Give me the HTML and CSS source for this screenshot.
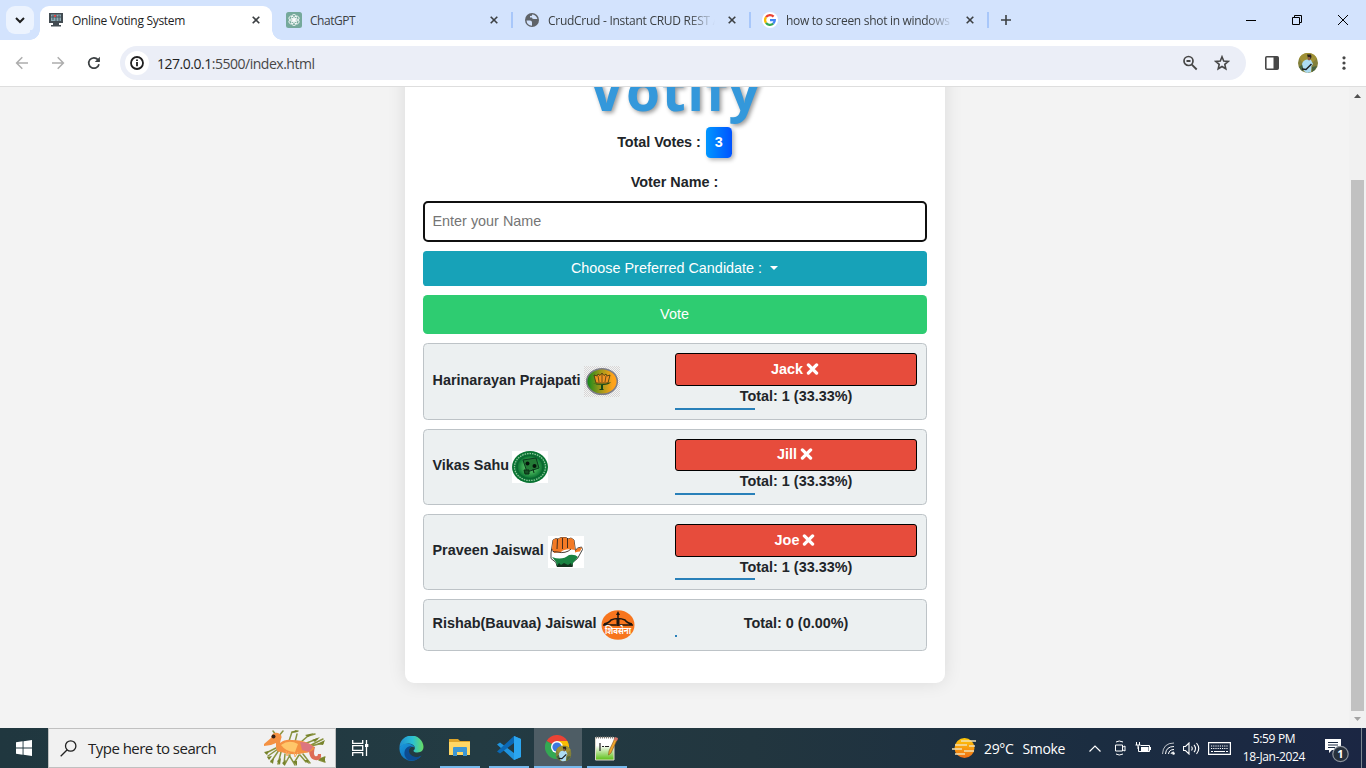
FILE: index.html
```html
<!DOCTYPE html>
<html lang="en">
<head>
<meta charset="utf-8">
<title>Online Voting System</title>
<link rel="stylesheet" href="styles.css">
</head>
<body>
<svg class="defs" width="0" height="0">
  <symbol id="cross" viewBox="0 0 8 8"><path d="M.7 .7 7.3 7.3M7.3 .7 .7 7.3" stroke="currentColor" stroke-width="1.6" fill="none"/></symbol>
  <symbol id="times" viewBox="0 0 12 12"><path d="M1.900 1.900 10.100 10.100M10.100 1.900 1.900 10.100" stroke="#fff" stroke-width="3.3" stroke-linecap="round"/></symbol>
  <symbol id="portrait" viewBox="0 0 20 20">
    <circle cx="10" cy="10" r="10" fill="#83803a"/>
    <path d="M1 5.500A10 10 0 0 1 19 5.500L15 9H4z" fill="#a09136"/>
    <path d="M1 14 5 11 5 18.600A10 10 0 0 1 1 14zM14 14l5-1a10 10 0 0 1-5 6z" fill="#496442"/>
    <path d="M4 11Q5 7 9 6.500L13 7 15 11 13.500 13 13 19 9 20 6 18z" fill="#addcf2"/>
    <path d="M9 1.500h4l.5 2.500-1 2-2.500-1z" fill="#27221f"/>
    <path d="M9.800 4h2.400v3l-1.200.6-1.200-.8z" fill="#8c5d42"/>
    <path d="M4 16l4 .5L13.500 11" stroke="#1c2026" stroke-width="1.500" fill="none"/>
  </symbol>
</svg>

<header class="tabstrip">
  <div class="tab-search"><svg width="12" height="12" viewBox="0 0 12 12"><path d="M2 4l4 4 4-4" fill="none" stroke="#1f1f1f" stroke-width="2"/></svg></div>
  <div class="tab tab-active">
    <svg class="favicon" width="16" height="16" viewBox="0 0 16 16"><path d="M1 1h14v10h-4v2h2v1.500H3V13h2v-2H1z" fill="#434c52"/><path d="M3 2.500h10v6.500H3z" fill="#8eabb5"/><path d="M5 3v5M8 2.500v6.500M11 3v6M3 5h10" stroke="#45545c"/><path d="M6 3h2v2H6z" fill="#d44"/></svg>
    <span class="tab-title t1">Online Voting System</span>
    <svg class="tab-close" width="8" height="8"><use href="#cross"/></svg>
  </div>
  <div class="tab">
    <svg class="favicon" width="16" height="16" viewBox="0 0 16 16"><rect width="16" height="16" rx="2.500" fill="#75a99b"/><g fill="none" stroke="#fff" stroke-width=".8"><ellipse cx="8" cy="5.600" rx="2.400" ry="3.200"/><ellipse cx="8" cy="5.600" rx="2.400" ry="3.200" transform="rotate(60 8 8)"/><ellipse cx="8" cy="5.600" rx="2.400" ry="3.200" transform="rotate(120 8 8)"/><ellipse cx="8" cy="5.600" rx="2.400" ry="3.200" transform="rotate(180 8 8)"/><ellipse cx="8" cy="5.600" rx="2.400" ry="3.200" transform="rotate(240 8 8)"/><ellipse cx="8" cy="5.600" rx="2.400" ry="3.200" transform="rotate(300 8 8)"/></g></svg>
    <span class="tab-title t2">ChatGPT</span>
    <svg class="tab-close" width="8" height="8"><use href="#cross"/></svg>
  </div>
  <div class="tab ruled">
    <svg class="favicon" width="16" height="16" viewBox="0 0 16 16"><circle cx="8" cy="8" r="7" fill="#5f6368"/><path d="M2.500 8.500H6q2 0 2 2v3.300Q3 13.500 2.500 8.500zM8 2.400q4 0 5.400 4.600H10q-2 0-2-1.500H6V4l2-.3z" fill="#d3e3fd"/></svg>
    <span class="tab-title t3">CrudCrud - Instant CRUD REST A</span>
    <svg class="tab-close" width="8" height="8"><use href="#cross"/></svg>
  </div>
  <div class="tab ruled">
    <svg class="favicon" width="16" height="16" viewBox="0 0 16 16"><circle cx="8" cy="8" r="8" fill="#fff"/><g fill="none" stroke-width="2.300"><path d="M4 5.200A4.900 4.900 0 0 1 11.600 4.600" stroke="#ea4335"/><path d="M4 5.200a4.900 4.900 0 0 0 0 5.600" stroke="#fbbc05"/><path d="M4 10.800a4.900 4.900 0 0 0 7.200.9" stroke="#34a853"/><path d="M8 8.100h4.800q0 2.200-1.600 3.600" stroke="#4285f4"/></g></svg>
    <span class="tab-title t4">how to screen shot in windows</span>
    <svg class="tab-close" width="8" height="8"><use href="#cross"/></svg>
  </div>
  <div class="new-tab ruled"><svg width="10" height="10"><path d="M5 0v10M0 5h10" stroke="#3c4043" stroke-width="1.600"/></svg></div>
  <div class="window-controls">
    <svg width="10" height="10"><path d="M0 5.500h10" stroke="#000"/></svg>
    <svg width="10" height="10"><path d="M.5 2.500h7v7h-7zM2.500 2.500v-2h7v7h-2" fill="none" stroke="#000"/></svg>
    <svg width="10" height="10"><path d="M0 0l10 10M10 0L0 10" stroke="#000"/></svg>
  </div>
</header>

<nav class="toolbar">
  <div class="nav-buttons">
    <svg width="14" height="14"><path d="M13 7H2M7.300 1.300 1.600 7l5.700 5.700" fill="none" stroke="#adadad" stroke-width="1.500"/></svg>
    <svg width="14" height="14"><path d="M1 7h11M6.700 1.300 12.400 7l-5.700 5.700" fill="none" stroke="#adadad" stroke-width="1.500"/></svg>
    <svg width="14" height="14"><path d="M12 8.200A5.200 5.200 0 1 1 10.900 3.600L12.300 5" fill="none" stroke="#3c4043" stroke-width="1.700"/><path d="M12.900.8v5.100H7.800z" fill="#3c4043"/></svg>
  </div>
  <div class="omnibox">
    <div class="site-info"><svg width="14" height="14"><circle cx="7" cy="7" r="6" fill="none" stroke="#1f1f1f" stroke-width="1.800"/><path d="M7 6v4.300M7 3.500v1.600" stroke="#1f1f1f" stroke-width="1.800"/></svg></div>
    <span class="url"><b>127.0.0.1</b>:5500/index.html</span>
    <svg class="omni-zoom" width="16" height="16"><circle cx="6.500" cy="6" r="4.500" fill="none" stroke="#474747" stroke-width="1.700"/><path d="M4.500 6h4M9.600 9.300 14.700 14.500" stroke="#474747" stroke-width="1.800"/></svg>
    <svg class="omni-star" width="16" height="16" viewBox="0 0 16 16"><path d="M8 1.800 9.700 6l4.500.4-3.400 3 1 4.400L8 11.500l-3.800 2.300 1-4.400-3.400-3L6.300 6z" fill="none" stroke="#474747" stroke-width="1.600"/></svg>
  </div>
  <div class="tool-icons">
    <svg width="14" height="14"><rect x=".8" y=".8" width="12.400" height="12.400" rx="1" fill="none" stroke="#474747" stroke-width="1.600"/><path d="M8.500 1H13v12H8.500z" fill="#474747"/></svg>
    <svg width="20" height="20"><use href="#portrait"/></svg>
    <svg width="4" height="14"><g fill="#474747"><circle cx="2" cy="1.800" r="1.600"/><circle cx="2" cy="7" r="1.600"/><circle cx="2" cy="12.200" r="1.600"/></g></svg>
  </div>
</nav>

<div class="viewport">
  <main class="page">
    <section class="card">
      <h1 class="brand">Votify</h1>
      <p class="total"><span>Total Votes :</span> <span class="badge">3</span></p>
      <p class="label">Voter Name :</p>
      <input class="name-input" placeholder="Enter your Name">
      <button class="choose">Choose Preferred Candidate : <i class="caret"></i></button>
      <button class="vote">Vote</button>

      <article class="candidate">
        <div class="who">Harinarayan Prajapati
          <svg width="36" height="31" viewBox="0 0 36 31"><defs><pattern id="check" width="2" height="2" patternUnits="userSpaceOnUse"><path d="M0 0h2v2H0z" fill="#f3f3f3"/><path d="M0 0h1v1H0zM1 1h1v1H1z" fill="#d6d6d6"/></pattern><linearGradient id="lotus"><stop offset="0" stop-color="#0b8a1c"/><stop offset=".4" stop-color="#8f961a"/><stop offset=".85" stop-color="#ffa31a"/></linearGradient></defs><path d="M0 0h36v31H0z" fill="url(#check)"/><ellipse cx="18" cy="15.500" rx="15.300" ry="12.800" fill="url(#lotus)" stroke="#7d7d88" stroke-width="1.500"/><path d="M10 9l3 1 1-2 2 1.500L18 7l2 2.500L22 8l1 2 3-1-2 8H12z" fill="#f29222" stroke="#3b3410" stroke-width=".8"/><path d="M14 10l1 6M18 8v8M22 10l-1 6" stroke="#3b3410" stroke-width=".7"/><path d="M9 17q9 3 18-1-2 3-8 3v5h-2v-5q-5 0-8-2z" fill="#164819"/><path d="M15.500 23.500h4" stroke="#173f17"/></svg>
        </div>
        <div class="tally"><button class="voter">Jack <svg width="13" height="12"><use href="#times"/></svg></button><p>Total: 1 (33.33%)</p><div class="bar"></div></div>
      </article>

      <article class="candidate second">
        <div class="who">Vikas Sahu
          <svg width="36" height="32" viewBox="0 0 36 32"><defs><radialGradient id="green"><stop offset="0" stop-color="#6ccd74"/><stop offset=".6" stop-color="#37a34f"/><stop offset="1" stop-color="#087332"/></radialGradient></defs><path d="M0 0h36v32H0z" fill="#fff"/><ellipse cx="18" cy="16" rx="18" ry="16" fill="#087332"/><ellipse cx="18" cy="16" rx="15.500" ry="13.500" fill="none" stroke="#8fc79c" stroke-width="1.300" stroke-dasharray="1.500 1"/><ellipse cx="18" cy="16" rx="13" ry="11.500" fill="url(#green)" stroke="#0b6430"/><path d="M11 9l13-2 3 10-12 4z" fill="#237b36" stroke="#0c3d20"/><circle cx="15.500" cy="12.500" r="2" fill="#05140a"/><circle cx="22.500" cy="15" r="2" fill="#05140a"/><path d="M12 19h5v4h-4zM21 18l1 4" stroke="#082e14" fill="#164f25"/></svg>
        </div>
        <div class="tally"><button class="voter">Jill <svg width="13" height="12"><use href="#times"/></svg></button><p>Total: 1 (33.33%)</p><div class="bar"></div></div>
      </article>

      <article class="candidate third">
        <div class="who">Praveen Jaiswal
          <svg width="36" height="32" viewBox="0 0 36 32"><path d="M0 0h36v32H0z" fill="#fff"/><path d="M3 17 5 4l3-1.500 2 .5 3-1.500 5 0 2 1.500 3-1 3 2 1.500 11 2-3 4-1 1 2.500-5 9-5 4v4H9l-1-4-5-4z" fill="#fff" stroke="#30302c" stroke-width=".9"/><path d="M4 13 5 4l3-1.500 2 .5 3-1.500 5 0 2 1.500 3-1 3 2 1 10q-10-2-14 2l-7 1z" fill="#f37a25"/><path d="M27 15l3-3 4-.500-2 4q-2 0-5 1z" fill="#f37a25"/><path d="M4 21q10 4 17-2 6-1 9 2l-5 6-1 3H9l-1-4z" fill="#198342"/><path d="M9.500 3 9 13M14.500 2v11M19.500 2v10M4 13q-1 3 5 3 9 2 14-3" fill="none" stroke="#34251b" stroke-width=".9"/><path d="M9 30l2-3 2 2 3-2 4 2 3-2 1 3v1H9z" fill="#12331e"/></svg>
        </div>
        <div class="tally"><button class="voter">Joe <svg width="13" height="12"><use href="#times"/></svg></button><p>Total: 1 (33.33%)</p><div class="bar"></div></div>
      </article>

      <article class="candidate fourth">
        <div class="who">Rishab(Bauvaa) Jaiswal
          <svg width="36" height="32" viewBox="0 0 36 32"><ellipse cx="18" cy="16" rx="16.500" ry="14.800" fill="#f7751e"/><path d="M3 16h30M4 15Q9 14 11 11q7-3 14 0 2 3 7 4M18 4v13" fill="none" stroke="#1c1610" stroke-width="1.500"/><path d="M18 2l2 4h-4zM16.500 9h3v6h-3z" fill="#1c1610"/><text x="18" y="24.500" text-anchor="middle" textLength="26" lengthAdjust="spacingAndGlyphs" class="hindi">शिवसेना</text></svg>
        </div>
        <div class="tally"><p>Total: 0 (0.00%)</p><div class="bar bar-empty"></div></div>
      </article>
    </section>
  </main>
  <aside class="scrollbar">
    <svg width="7" height="4"><path d="M0 4 3.500 0 7 4z" fill="#505050"/></svg>
    <div class="thumb"></div>
    <svg width="7" height="4"><path d="M0 0h7L3.500 4z" fill="#a3a3a3"/></svg>
  </aside>
</div>

<footer class="taskbar">
  <div class="start"><svg width="16" height="16"><path d="M0 2.200 6.600 1.300V7.500H0zM7.500 1.200 16 0v7.500H7.500zM0 8.500h6.600v6.200L0 13.800zM7.500 8.500H16V16l-8.500-1.200z" fill="#fff"/></svg></div>
  <div class="search">
    <svg width="17" height="17"><circle cx="10.700" cy="6" r="5.200" fill="none" stroke="#222" stroke-width="1.300"/><path d="M7 10 .7 16.300" stroke="#222" stroke-width="1.300"/></svg>
    <span>Type here to search</span>
    <svg class="dragon" width="66" height="38" viewBox="0 0 66 38">
      <g fill="none" stroke="#8a9340" stroke-width="1.500" stroke-linecap="round"><path d="M14 6 11 2M16 8l5-6M27 12l3-9 6-1M33 13l2-8M39 13l7-6 7-2M42 15l13-5M14 19 4 24M16 20 6 27M17 21 9 33M19 23l-3 12M23 25l-1 10M28 26l-5 9M27 26l6 10M37 26l-5 8M38 26l6 7M41 25l7 9M49 17l12-3M49 16l12-6M57 31l6 2M58 30l5-2"/></g>
      <path d="M2 23l5-1-2 4zM5 28l5-1-3 4zM8 32l4-3-1 6zM15 32l4-3-1 7zM20 34l4-3-1 6zM31 32l4 0 0 5zM42 31l4 0 1 4zM29 4l5-3 2 2zM43 6l9-2-6 4zM50 11l8-3-5 5zM55 15l8-4-2 5zM56 30l7-2 0 5z" fill="#77832b"/>
      <path d="M47 16q-1 14 6 15 7 1 6-6l-3 0q0 3-3 2-2-2 0-9z" fill="#dd6d55"/>
      <path d="M2 15 9 9q1-6 7-5 5 2 3 6l-1 4q5-4 12-3 10 0 16 3 6 2 6 6-4 4-10 4-12 3-23-1-5 0-5-5l0-4-5 2-7 1z" fill="#f49142"/>
      <path d="M19 16q8-6 17-1l-3 8q-9 0-14-7z" fill="#ffc66a"/><path d="M38 13q9 0 13 5l-4 5-7-2z" fill="#dc7580"/>
      <path d="M24 22l1 5 2-4M32 23l1 5 3-5" stroke="#f9a95a" fill="none"/><circle cx="11.500" cy="7.500" r="2" fill="#352015"/>
    </svg>
  </div>
  <div class="apps">
    <div class="app task-view"><svg width="17" height="16"><path d="M.7 0v3.300h10V0M.7 16v-3.300h10V16M.7 5.700h10v4.600H.7zM14.500 0v16" fill="none" stroke="#fff" stroke-width="1.300"/><path d="M13 4h3.300v3H13z" fill="#fff"/></svg></div>
    <div class="app edge"><svg width="25" height="25" viewBox="0 0 25 25"><defs><linearGradient id="e1"><stop offset="0" stop-color="#218fd2"/><stop offset=".55" stop-color="#2bc0d3"/><stop offset="1" stop-color="#67dd62"/></linearGradient><linearGradient id="e2" x2="1" y2="1"><stop offset="0" stop-color="#1a9adf"/><stop offset="1" stop-color="#0a59a6"/></linearGradient></defs><path d="M.5 12A12 12 0 0 1 24.500 11q0 5-6 5.500-4 0-4-2 2-1 1-4-2-3-6-3Q3 8 .5 12z" fill="url(#e1)"/><path d="M.5 12Q3 7 9 7.500q5 .5 6.500 4-4-2-6 2-1 6 5 8 4 1 8-2A12 12 0 0 1 .5 12z" fill="url(#e2)"/><path d="M9 24Q4 20 6 14q2-4 7-4-5 3-2 8 4 5 11 2-5 6-13 4z" fill="#0d4c91"/></svg></div>
    <div class="app folder open"><svg width="23" height="20"><path d="M0 1h9l2 2h10v3H0z" fill="#dfa52a"/><path d="M0 4h21v13H0z" fill="#ffd765"/><path d="M4 18v-8q0-1 1-1h12q1 0 1 1v8h-4v-4H8v4z" fill="#3c96d4"/></svg></div>
    <div class="app code open"><svg width="25" height="24"><path d="M18 0l7 3v18l-7 3L1 8.500l3-2L18 17z" fill="#2094de"/><path d="M18 0v7L4 17.500 1 15.500z" fill="#0b69b5"/><path d="M18 0l7 3v18l-7 3z" fill="#2ba6f0"/></svg></div>
    <div class="app chrome open"><svg width="28" height="27" viewBox="0 0 28 27"><path d="M12 12 1.600 6A12 12 0 0 1 22.400 6z" fill="#ea4335"/><path d="M12 12V6h10.400A12 12 0 0 1 12 24z" fill="#fbbc05"/><path d="M12 12l5 3-5 9A12 12 0 0 1 1.600 6z" fill="#34a853"/><circle cx="12" cy="12" r="6" fill="#fff"/><circle cx="12" cy="12" r="4.600" fill="#3c79df"/><use href="#portrait" x="10.500" y="10.500" width="16" height="16"/></svg></div>
    <div class="app notepad open"><svg width="23" height="25"><defs><linearGradient id="np" x2="0" y2="1"><stop offset=".35" stop-color="#fff"/><stop offset="1" stop-color="#5abf13"/></linearGradient></defs><path d="M.5 1.500h18.500V24H.5z" fill="url(#np)" stroke="#ddd8cc"/><path d="M1 1.500h18" stroke="#777" stroke-dasharray="1 1" stroke-width="2"/><path d="M5 7v8M7 10.500h2M10 10.500h4" stroke="#222" stroke-width="1.200"/><path d="M20 2l2.500 1L16 17l-2.500 2 .5-4z" fill="#efa52d" stroke="#81501b" stroke-width=".6"/><path d="M20 1l3 1-1 3-3-1z" fill="#d17169"/></svg></div>
  </div>
  <div class="tray">
    <svg class="weather" width="25" height="22"><defs><linearGradient id="sun" x2="0" y2="1"><stop offset="0" stop-color="#ffca08"/><stop offset="1" stop-color="#ef6d15"/></linearGradient></defs><circle cx="12.500" cy="11" r="10" fill="url(#sun)"/><path d="M9 4h15M3 8h12M17 9h6M0 12h10M12 14h10M3 17h10" stroke="#f1dfb3" stroke-width="1.700"/></svg>
    <span class="temp"><span>29°C</span><span>Smoke</span></span>
    <svg class="chev" width="12" height="7"><path d="M.5 6.500 6 1l5.500 5.500" fill="none" stroke="#fff" stroke-width="1.200"/></svg>
    <svg class="cam" width="12" height="16"><path d="M1.500 5h7v6h-7zM9 7l2-1v5l-2-1M2 2Q5 0 9 2M2 14q3 2 7 0" fill="none" stroke="#fff"/></svg>
    <svg class="battery" width="16" height="12"><path d="M3.500 4.500v5h11v-6h-9M1.500 0v3M4.500 0v3M.5 3h5M3 3v4" fill="none" stroke="#fff"/><path d="M6 5h7.500v4H6zM15 5h1v3h-1z" fill="#fff"/></svg>
    <svg class="wifi" width="13" height="13"><g fill="none" stroke="#fff"><path d="M.5 12Q1 1 12 1" opacity=".7"/><path d="M3.500 12Q4 4.500 12 4.500M6.500 12q.5-4.500 5.500-4.500M9 12q0-2 3-2"/></g><circle cx="11.500" cy="11.500" r="1.300" fill="#fff"/></svg>
    <svg class="speaker" width="17" height="13"><path d="M.5 4.500h2L6 1v11L2.500 8.500h-2zM8.500 4.500q1.500 2 0 4M11 2.800q3 3.700 0 7.400M13.500 1q4.500 5.500 0 11" fill="none" stroke="#fff" stroke-width="1.100"/></svg>
    <svg class="keyboard" width="23" height="13"><path d="M.6.6h21.800v11.800H.6z" fill="none" stroke="#fff" stroke-width="1.200"/><path d="M3 4h17M3 6.500h17" stroke="#fff" stroke-dasharray="1.200 1"/><path d="M3 9.500h2M6 9.500h11M18 9.500h2" stroke="#fff"/></svg>
    <div class="clock"><span>5:59 PM</span><span class="date">18-Jan-2024</span></div>
    <svg class="notice" width="25" height="25"><path d="M1 1h16v11H8l-3 3v-3H1z" fill="#fff"/><path d="M4 4.500h10M4 7h10M4 9.500h7" stroke="#1c2b43"/><circle cx="16.500" cy="16" r="7.700" fill="#27303c" stroke="#8d939c" stroke-width="1.200"/><text x="16.500" y="20" text-anchor="middle" class="count">1</text></svg>
    <i class="show-desktop"></i>
  </div>
</footer>
</body>
</html>
```
FILE: styles.css
```css
* { box-sizing: border-box; }
body { margin: 0; width: 1366px; height: 768px; overflow: hidden; display: flex; flex-direction: column; background: #f3f3f3; font-family: "Open Sans", "Noto Sans", sans-serif; }
svg { display: block; flex: none; }
.defs { position: absolute; }
p, h1 { margin: 0; }

/* Tab strip */
.tabstrip { height: 40px; flex: none; display: flex; align-items: flex-start; background: #d3e3fd; padding: 6px 0 0 6px; color: #3c4043; }
.tab-search { width: 28px; height: 28px; margin-right: 6px; border-radius: 9px; background: #ecf3fe; display: grid; place-items: center; }
.tab { width: 238px; height: 28px; display: flex; align-items: center; padding-left: 14px; position: relative; }
.tab-active { width: 232px; height: 34px; padding: 0 0 6px 8px; background: #fff; border-radius: 9px 9px 0 0; color: #1f1f1f; }
.tab-active::before, .tab-active::after { content: ""; position: absolute; bottom: 0; width: 10px; height: 10px; }
.tab-active::before { left: -10px; background: radial-gradient(circle at 0 0, #d3e3fd 9.5px, #fff 10px); }
.tab-active::after { right: -10px; background: radial-gradient(circle at 100% 0, #d3e3fd 9.5px, #fff 10px); }
.favicon { margin-right: 8px; }
.tab-title { width: 168px; white-space: nowrap; font-size: 12px; line-height: 18px; padding-top: 1px; }
.t3, .t4 { mask-image: linear-gradient(90deg, #000 140px, transparent 167px); }
.tab-close { margin-left: 12px; color: #3c4043; }
.ruled::before { content: ""; position: absolute; left: 1px; top: 6px; width: 2px; height: 16px; background: #a8c7fa; }
.new-tab { width: 40px; height: 28px; position: relative; display: flex; align-items: center; padding-left: 15px; margin-right: auto; }
.window-controls { display: flex; gap: 36px; padding: 9px 18px 0 0; }
.t1 { letter-spacing: -.3px; }
.t2 { letter-spacing: -.45px; }
.t3 { letter-spacing: -.27px; }
.t4 { letter-spacing: -.3px; }

/* Toolbar */
.toolbar { height: 47px; flex: none; display: flex; align-items: center; background: #fff; border-bottom: 1px solid #dedede; }
.nav-buttons { display: flex; gap: 22px; width: 120px; padding-left: 15px; }
.omnibox { width: 1126px; height: 34px; border-radius: 17px; background: #ebeef7; display: flex; align-items: center; padding-left: 5px; }
.site-info { width: 24px; height: 24px; border-radius: 50%; background: #fff; display: grid; place-items: center; }
.url { margin-left: 8px; flex: 1; font-size: 14px; color: #474747; letter-spacing: -.48px; }
.url b { font-weight: 400; color: #1f1f1f; }
.omni-zoom { margin-right: 16px; }
.omni-star { margin-right: 16px; }
.tool-icons { display: flex; align-items: center; padding-left: 19px; gap: 19px; }
.tool-icons svg:last-child { margin-left: 5px; }

/* Page */
.viewport { height: 641px; flex: none; display: flex; overflow: hidden; }
.page { width: 1349px; display: flex; flex-direction: column; align-items: center; padding-left: 1px; overflow: hidden; font-family: "Liberation Sans", Arial, sans-serif; font-size: 14.4px; color: #212529; }
.card { width: 540px; height: 656px; flex: none; margin-top: -60px; background: #fff; border-radius: 9px; box-shadow: 0 0 18px rgba(0, 0, 0, .1); padding: 30px 18px 0; display: flex; flex-direction: column; }
.brand { height: 70px; flex: none; font: 700 55px/66px "Open Sans", sans-serif; letter-spacing: 1.6px; text-align: center; color: #3498db; text-shadow: 2px 2px 4px rgba(0, 0, 0, .4); white-space: nowrap; }
.total { height: 31px; display: flex; justify-content: center; gap: 5px; font-weight: 700; line-height: 30px; letter-spacing: -.05px; }
.total span:first-child { margin-left: -1px; }
.badge { width: 26px; height: 31px; border-radius: 4.5px; text-align: center; color: #fff; background: linear-gradient(90deg, #0097ff, #0053ff); box-shadow: 2px 2px 4px rgba(0, 0, 0, .3); }
.label { height: 43px; padding: 16px 1px 0 0; line-height: 17px; text-align: center; font-weight: 700; }
.name-input { height: 41px; flex: none; margin: 0 0 9px; border: 2px solid #101010; border-radius: 5px; padding: 0 8px 2px 7.5px; font: 14.4px "Liberation Sans", Arial, sans-serif; background: #fff; }
.name-input::placeholder { color: #757575; }
button { border: 0; font: 14.4px "Liberation Sans", Arial, sans-serif; color: #fff; display: flex; align-items: center; justify-content: center; flex: none; padding: 0 1px 2px 0; }
.choose { height: 35px; border-radius: 3.6px; background: #17a2b8; margin-bottom: 9px; }
.caret { margin-left: 8px; border: 4px solid transparent; border-top-color: #fff; border-bottom: 0; }
.vote { height: 39px; border-radius: 4.5px; background: #2ecc71; margin-bottom: 9px; }
.candidate { height: 77px; flex: none; display: flex; border: 1px solid #bdc3c7; border-radius: 4.5px; background: #ecf0f1; padding: 9px; margin-bottom: 9px; font-weight: 700; }
.candidate.second, .candidate.third { height: 76px; }
.candidate.fourth { height: 52px; }
.who { width: 242px; display: flex; align-items: center; gap: 4px; white-space: nowrap; padding-bottom: 3px; line-height: 17px; text-indent: -.5px; }
.who svg { margin-top: 2px; }
.second .who svg { margin-left: -1px; }
.tally { width: 242px; text-align: center; }
.voter { width: 242px; height: 33px; border: 1px solid #000; border-radius: 3px; background: #e74c3c; font-weight: 700; gap: 3px; padding-right: 2px; }
.second .voter { height: 32px; }
.tally p { height: 22px; line-height: 21px; }
.third .tally p { height: 21px; line-height: 21px; }
.fourth .tally p { height: 26px; line-height: 29px; }
.bar { width: 80px; height: 2px; background: #2980b9; }
.bar-empty { width: 2px; }
.hindi { font: 700 9px "Noto Sans", sans-serif; fill: #fff; text-indent: 0; }

.scrollbar { width: 17px; background: #f1f1f1; display: flex; flex-direction: column; align-items: center; padding: 7px 0 7px; }
.thumb { width: 13px; height: 531px; margin: 82px 0 auto; background: #c1c1c1; }

/* Taskbar */
.taskbar { height: 40px; flex: none; display: flex; background: linear-gradient(90deg, #20373f, #233b43 35%, #22363f 55%, #1b2d41 80%, #1b2643); color: #fff; }
.start { width: 48px; display: grid; place-items: center; }
.search { width: 288px; border: 1px solid #c0c0c0; background: #f1f1f1; color: #222; display: flex; align-items: center; padding-left: 11px; }
.search span { margin-left: 11px; width: 175px; font-size: 15px; letter-spacing: -.52px; white-space: nowrap; }
.dragon { margin-left: -1px; }
.apps { display: flex; }
.app { width: 49px; height: 40px; display: grid; place-items: center; }
.task-view { width: 48px; }
.edge { width: 54px; }
.open { box-shadow: inset 0 -2px #76b9ed; }
.folder { width: 40px; margin-left: 2px; }
.code { width: 40px; margin-left: 9px; }
.code svg { margin-left: -2px; }
.chrome { width: 48px; margin-left: 5px; background-color: #4e5d65; }
.chrome svg { margin-left: 2px; margin-top: 1px; }
.notepad { width: 40px; margin-left: 5px; }
.notepad svg { margin-left: -2px; }
.tray { margin-left: auto; display: flex; align-items: center; }
.temp { width: 112px; padding-left: 7px; font-size: 14px; white-space: nowrap; letter-spacing: -.35px; display: flex; gap: 9px; }
.cam { margin-left: 13px; }
.battery { margin-left: 9px; }
.wifi { margin-left: 11px; }
.speaker { margin-left: 8px; }
.keyboard { margin-left: 8px; }
.clock { width: 86px; display: flex; flex-direction: column; align-items: center; font-size: 12px; line-height: 18px; letter-spacing: -.35px; white-space: nowrap; }
.notice { margin: 4px 0 0 7px; }
.count { font: 700 11px "Open Sans", sans-serif; fill: #fff; }
.show-desktop { width: 1px; height: 40px; background: #7c8790; margin: 0 4px 0 12px; }
```
